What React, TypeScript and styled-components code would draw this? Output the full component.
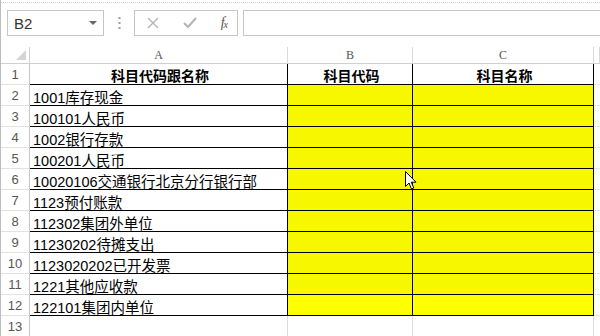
import React from 'react';
import styled, { createGlobalStyle } from 'styled-components';

const GlobalStyle = createGlobalStyle`
  html, body {
    margin: 0;
    padding: 0;
    background: #ffffff;
    overflow: hidden;
  }
`;

/* 整个窗口 */
const Window = styled.div`
  position: relative;
  width: 599px;
  height: 336px;
  border-left: 1px solid #bdbdbd;
  background: #ffffff;
  overflow: hidden;
  font-family: 'Liberation Sans', 'Noto Sans CJK SC', sans-serif;
`;

/* 顶部虚线 */
const TopStrip = styled.div`
  height: 2px;
  border-bottom: 1px dotted #d6d6d6;
`;

/* 编辑栏 */
const FormulaBar = styled.div`
  display: flex;
  align-items: center;
  height: 26px;
  padding: 7px 0 11px 6px;
`;

const NameBox = styled.div`
  box-sizing: border-box;
  display: flex;
  align-items: center;
  justify-content: space-between;
  width: 97px;
  height: 26px;
  padding: 0 6px 0 6px;
  border: 1px solid #c6c6c6;
  color: #333;
  font-size: 15px;
`;

const Caret = styled.span`
  width: 0;
  height: 0;
  border-left: 4px solid transparent;
  border-right: 4px solid transparent;
  border-top: 4px solid #666;
`;

const Grip = styled.div`
  display: flex;
  justify-content: center;
  width: 30px;
`;

const FxButtons = styled.div`
  box-sizing: border-box;
  display: flex;
  align-items: center;
  justify-content: space-between;
  width: 104px;
  height: 26px;
  padding: 0 10px 0 12px;
  border: 1px solid #c6c6c6;
`;

const FxLabel = styled.span`
  font-family: 'Liberation Serif', serif;
  font-style: italic;
  font-size: 14px;
  color: #555;
  letter-spacing: -1px;

  sub {
    font-size: 10px;
    vertical-align: -1px;
  }
`;

const FormulaInput = styled.div`
  box-sizing: border-box;
  flex: 1;
  height: 26px;
  margin-left: 5px;
  border: 1px solid #c6c6c6;
  border-right: none;
`;

/* 表格 */
const Sheet = styled.div`
  display: grid;
  grid-template-columns: 29px 258px 125px 181px 1fr;
  grid-template-rows: 17px repeat(13, 21px);
`;

const Corner = styled.div`
  box-sizing: border-box;
  display: flex;
  justify-content: flex-end;
  align-items: flex-end;
  padding: 0 3px 3px 0;
  border-right: 1px solid #d0d0d0;
  border-bottom: 1px solid #d0d0d0;
`;

const CornerMark = styled.div`
  width: 10px;
  height: 10px;
  background: #d4d4d4;
  clip-path: polygon(100% 0, 100% 100%, 0 100%);
`;

const ColHead = styled.div`
  box-sizing: border-box;
  display: flex;
  align-items: center;
  justify-content: center;
  border-right: 1px solid #dadada;
  border-bottom: 1px solid #d0d0d0;
  font-family: 'Liberation Serif', serif;
  font-size: 12px;
  color: #555;
`;

const RowHead = styled.div`
  box-sizing: border-box;
  display: flex;
  align-items: flex-end;
  justify-content: center;
  padding-bottom: 2px;
  border-right: 1px solid #c8c8c8;
  border-bottom: 1px solid #e2e2e2;
  font-size: 13px;
  color: #555;
`;

const Cell = styled.div<{ $fill?: string; $bold?: boolean; $center?: boolean; $grid?: boolean }>`
  box-sizing: border-box;
  display: flex;
  align-items: center;
  justify-content: ${p => (p.$center ? 'center' : 'flex-start')};
  padding: 2px 0 0 3px;
  background: ${p => p.$fill || '#ffffff'};
  border-right: 1px solid ${p => (p.$grid ? '#dcdcdc' : '#000000')};
  border-bottom: 1px solid ${p => (p.$grid ? '#e4e4e4' : '#000000')};
  font-family: 'Liberation Sans', 'Noto Sans CJK SC', sans-serif;
  font-size: ${p => (p.$bold ? '14px' : '14.5px')};
  font-weight: ${p => (p.$bold ? 700 : 400)};
  color: #000;
  white-space: nowrap;
  overflow: hidden;
`;

const EmptyCell = styled.div`
  box-sizing: border-box;
  border-bottom: 1px solid #e4e4e4;
`;

const Pointer = styled.svg`
  position: absolute;
  left: 404px;
  top: 171px;
`;

const rows = [
  '1001库存现金',
  '100101人民币',
  '1002银行存款',
  '100201人民币',
  '10020106交通银行北京分行银行部',
  '1123预付账款',
  '112302集团外单位',
  '11230202待摊支出',
  '1123020202已开发票',
  '1221其他应收款',
  '122101集团内单位',
];

const YELLOW = '#f7f700';

export default function App() {
  return (
    <>
      <GlobalStyle />
      <Window>
        <TopStrip />
        <FormulaBar>
          <NameBox>
            B2
            <Caret />
          </NameBox>
          <Grip>
            <svg width="3" height="12" viewBox="0 0 3 12">
              <rect x="0.5" y="0" width="2" height="2" fill="#9a9a9a" />
              <rect x="0.5" y="5" width="2" height="2" fill="#9a9a9a" />
              <rect x="0.5" y="10" width="2" height="2" fill="#9a9a9a" />
            </svg>
          </Grip>
          <FxButtons>
            <svg width="12" height="12" viewBox="0 0 12 12">
              <path d="M1 1 L11 11 M11 1 L1 11" stroke="#b4b4b4" strokeWidth="1.4" fill="none" />
            </svg>
            <svg width="14" height="12" viewBox="0 0 14 12">
              <path d="M1 6 L5 10 L13 1" stroke="#b4b4b4" strokeWidth="2" fill="none" />
            </svg>
            <FxLabel>
              f<sub>x</sub>
            </FxLabel>
          </FxButtons>
          <FormulaInput />
        </FormulaBar>

        <Sheet>
          <Corner>
            <CornerMark />
          </Corner>
          <ColHead>A</ColHead>
          <ColHead>B</ColHead>
          <ColHead>C</ColHead>
          <ColHead />

          <RowHead>1</RowHead>
          <Cell $bold $center>科目代码跟名称</Cell>
          <Cell $bold $center>科目代码</Cell>
          <Cell $bold $center>科目名称</Cell>
          <EmptyCell />

          {rows.map((text, i) => (
            <React.Fragment key={text}>
              <RowHead>{i + 2}</RowHead>
              <Cell>{text}</Cell>
              <Cell $fill={i === rows.length - 1 ? '#ffff00' : YELLOW} />
              <Cell $fill={i === rows.length - 1 ? '#ffff00' : YELLOW} />
              <EmptyCell />
            </React.Fragment>
          ))}

          <RowHead>13</RowHead>
          <Cell $grid />
          <Cell $grid />
          <Cell $grid />
          <EmptyCell />
        </Sheet>

        <Pointer width="12" height="19" viewBox="0 0 12 19">
          <path
            d="M0.5 0.5 L0.5 15.5 L4 12 L6.5 18 L8.8 17 L6.3 11.2 L11 11.2 Z"
            fill="#ffffff"
            stroke="#000000"
            strokeWidth="1"
            strokeLinejoin="round"
          />
        </Pointer>
      </Window>
    </>
  );
}
